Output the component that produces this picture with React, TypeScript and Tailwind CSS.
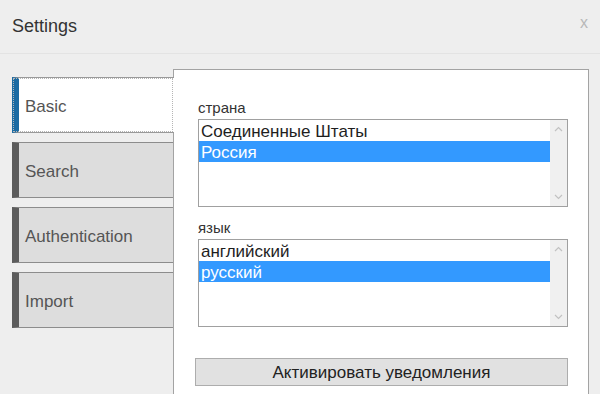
import { ReactNode } from 'react'

const tabs = [
  { label: 'Basic', active: true },
  { label: 'Search', active: false },
  { label: 'Authentication', active: false },
  { label: 'Import', active: false },
]

function Chevron({ up }: { up?: boolean }) {
  return (
    <svg width="9" height="6" viewBox="0 0 9 6" className="text-[#c2c2c2]">
      <path
        d={up ? 'M1 5 L4.5 1.5 L8 5' : 'M1 1 L4.5 4.5 L8 1'}
        fill="none"
        stroke="currentColor"
        strokeWidth="1.2"
      />
    </svg>
  )
}

function ListBox({ items, selected }: { items: string[]; selected: number }) {
  return (
    <div className="flex h-[88px] border border-[#a0a0a0] bg-white">
      <div className="flex-1 flex flex-col">
        {items.map((item, i) => (
          <div
            key={item}
            className={`h-[21px] leading-[23px] pl-[2px] text-[17px] ${
              i === selected ? 'bg-[#3399ff] text-white' : 'text-[#1e1e1e]'
            }`}
          >
            {item}
          </div>
        ))}
      </div>
      <div className="w-[17px] bg-[#f0f0f0] flex flex-col items-center justify-between py-[6px]">
        <Chevron up />
        <Chevron />
      </div>
    </div>
  )
}

function Field({ label, children, className }: { label: string; children: ReactNode; className?: string }) {
  return (
    <div className={className}>
      <div className="text-[15px] leading-[17px] text-[#333] mb-[3px]">{label}</div>
      {children}
    </div>
  )
}

export default function App() {
  return (
    <div
      className="w-[600px] h-[394px] bg-[#eeeeee] overflow-hidden flex flex-col"
      style={{ fontFamily: '"Liberation Sans", Arial, sans-serif' }}
    >
      <div className="h-[54px] shrink-0 border-b border-[#e3e3e3] flex items-center justify-between pl-[12px] pr-[12px]">
        <span className="text-[18px] text-[#333]">Settings</span>
        <span className="-mt-[8px] text-[16px] text-[#b8b8b8]">x</span>
      </div>

      <div className="flex-1 flex pt-[15px]">
        <div className="relative z-10 w-[161px] mt-[8px] ml-[12px] flex flex-col gap-[9px]">
          {tabs.map((tab) => (
            <div
              key={tab.label}
              className={`h-[56px] flex items-center pl-[6px] pt-[3px] border-l-[7px] border-y text-[17px] text-[#555] ${
                tab.active
                  ? 'w-[162px] bg-white border-l-[#1b6ba3] border-y-[#999] outline-1 outline-dotted outline-[#b5b5b5] -outline-offset-2'
                  : 'w-[161px] bg-[#dddddd] border-l-[#5c5c5c] border-y-[#8c8c8c]'
              }`}
            >
              {tab.label}
            </div>
          ))}
        </div>

        <div className="flex-1 mr-[11px] bg-white border border-b-0 border-[#a3a3a3] pt-[29px] pl-[24px] pr-[20px]">
          <Field label="страна">
            <ListBox items={['Соединенные Штаты', 'Россия']} selected={1} />
          </Field>
          <Field label="язык" className="mt-[12px]">
            <ListBox items={['английский', 'русский']} selected={1} />
          </Field>
          <button className="mt-[31px] -ml-[3px] w-[calc(100%+3px)] h-[28px] pt-[1px] bg-[#e1e1e1] border border-[#adadad] text-[17px] text-[#222]">
            Активировать уведомления
          </button>
        </div>
      </div>
    </div>
  )
}
